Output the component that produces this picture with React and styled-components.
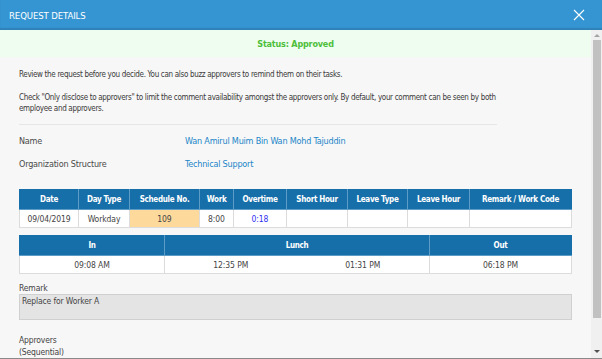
import React from "react";
import styled, { createGlobalStyle } from "styled-components";

const GlobalStyle = createGlobalStyle`
    html, body {
        margin: 0;
        padding: 0;
        background: #f7f7f7;
    }
    body {
        font-family: "DejaVu Sans Condensed", "Liberation Sans", sans-serif;
        color: #444;
    }
`;

const rows = [
    { date: "09/04/2019", dayType: "Workday", schedule: "109", work: "8:00", overtime: "0:18" }
];

const App = () => {
    return (
        <>
            <GlobalStyle />
            <Dialog>
                <Header>
                    <Title>REQUEST DETAILS</Title>
                    <Close aria-label="close">
                        <svg width="12" height="12" viewBox="0 0 12 12">
                            <path d="M1 1 L11 11 M11 1 L1 11" stroke="#fff" strokeWidth="1.1" fill="none" />
                        </svg>
                    </Close>
                </Header>
                <Main>
                    <Content>
                        <Status>Status: Approved</Status>
                        <Body>
                            <Note>Review the request before you decide. You can also buzz approvers to remind them on their tasks.</Note>
                            <Note $gap>Check "Only disclose to approvers" to limit the comment availability amongst the approvers only. By default, your comment can be seen by both employee and approvers.</Note>
                            <Divider />
                            <InfoRow $first>
                                <Label>Name</Label>
                                <Value>Wan Amirul Muim Bin Wan Mohd Tajuddin</Value>
                            </InfoRow>
                            <InfoRow>
                                <Label>Organization Structure</Label>
                                <Value>Technical Support</Value>
                            </InfoRow>

                            <Table $top={14}>
                                <colgroup>
                                    <col style={{ width: 59 }} />
                                    <col style={{ width: 51 }} />
                                    <col style={{ width: 70 }} />
                                    <col style={{ width: 34 }} />
                                    <col style={{ width: 53 }} />
                                    <col style={{ width: 61 }} />
                                    <col style={{ width: 60 }} />
                                    <col style={{ width: 62 }} />
                                    <col />
                                </colgroup>
                                <thead>
                                    <tr>
                                        <Th>Date</Th>
                                        <Th>Day Type</Th>
                                        <Th>Schedule No.</Th>
                                        <Th>Work</Th>
                                        <Th>Overtime</Th>
                                        <Th>Short Hour</Th>
                                        <Th>Leave Type</Th>
                                        <Th>Leave Hour</Th>
                                        <Th>Remark / Work Code</Th>
                                    </tr>
                                </thead>
                                <tbody>
                                    {rows.map(r => (
                                        <tr key={r.date}>
                                            <Td>{r.date}</Td>
                                            <Td>{r.dayType}</Td>
                                            <Td $bg="#fdd99b">{r.schedule}</Td>
                                            <Td>{r.work}</Td>
                                            <Td $color="#2f2ff0">{r.overtime}</Td>
                                            <Td />
                                            <Td />
                                            <Td />
                                            <Td />
                                        </tr>
                                    ))}
                                </tbody>
                            </Table>

                            <Table $top={7}>
                                <colgroup>
                                    <col style={{ width: 145 }} />
                                    <col style={{ width: 132 }} />
                                    <col style={{ width: 133 }} />
                                    <col />
                                </colgroup>
                                <thead>
                                    <tr>
                                        <Th>In</Th>
                                        <Th colSpan={2}>Lunch</Th>
                                        <Th>Out</Th>
                                    </tr>
                                </thead>
                                <tbody>
                                    <tr>
                                        <Td>09:08 AM</Td>
                                        <Td $noRight>12:35 PM</Td>
                                        <Td $noLeft>01:31 PM</Td>
                                        <Td>06:18 PM</Td>
                                    </tr>
                                </tbody>
                            </Table>

                            <FieldLabel>Remark</FieldLabel>
                            <RemarkBox>Replace for Worker A</RemarkBox>

                            <Approvers>
                                Approvers
                                <br />
                                (Sequential)
                            </Approvers>
                        </Body>
                    </Content>
                    <ScrollTrack>
                        <Arrow $up />
                        <Thumb />
                        <Arrow />
                    </ScrollTrack>
                </Main>
            </Dialog>
        </>
    );
};

//Design
const Dialog = styled.div`
    display: flex;
    flex-direction: column;
    width: 602px;
    height: 359px;
    box-sizing: border-box;
    border-bottom: 1px solid #8a8a8a;
    overflow: hidden;
`;
const Header = styled.div`
    flex: 0 0 30px;
    display: flex;
    align-items: center;
    justify-content: space-between;
    padding: 0 17px 0 9px;
    background: #3595d2;
    box-shadow: inset 0 -2px 1px rgba(0, 0, 0, 0.12);
`;
const Title = styled.div`
    color: #fff;
    font-size: 9.5px;
    letter-spacing: -0.1px;
`;
const Close = styled.div`
    display: flex;
    width: 12px;
    height: 12px;
`;
const Main = styled.div`
    flex: 1;
    min-height: 0;
    display: flex;
`;
const Content = styled.div`
    flex: 1;
    overflow: hidden;
    background: #f7f7f7;
`;
const ScrollTrack = styled.div`
    flex: 0 0 11px;
    display: flex;
    flex-direction: column;
    align-items: center;
    background: #f0f0f0;
    padding: 4px 0 5px;
    box-sizing: border-box;
`;
const Arrow = styled.div`
    width: 0;
    height: 0;
    border-left: 3px solid transparent;
    border-right: 3px solid transparent;
    ${p => (p.$up ? "border-bottom: 3px solid #a3a3a3;" : "border-top: 3px solid #505050;")}
    ${p => (p.$up ? "margin-bottom: 3px;" : "margin-top: auto;")}
`;
const Thumb = styled.div`
    width: 8px;
    height: 278px;
    background: #c1c1c1;
`;
const Status = styled.div`
    height: 27px;
    display: flex;
    align-items: center;
    justify-content: center;
    background: #eefdf0;
    color: #4dbf3a;
    font-weight: bold;
    font-size: 9px;
    letter-spacing: -0.2px;
`;
const Body = styled.div`
    padding: 12px 19px 20px 19px;
`;
const Note = styled.p`
    width: 500px;
    margin: ${p => (p.$gap ? "12px" : "0")} 0 0 0;
    font-size: 8px;
    line-height: 11px;
    letter-spacing: -0.33px;
    color: #3a3a3a;
`;
const Divider = styled.div`
    width: 478px;
    height: 1px;
    background: #e6e6e6;
    margin-top: 10px;
`;
const InfoRow = styled.div`
    display: flex;
    height: 23px;
    align-items: center;
    font-size: 9px;
    letter-spacing: -0.2px;
    margin-top: ${p => (p.$first ? "4px" : "0")};
`;
const Label = styled.div`
    width: 166px;
    color: #4a4a4a;
`;
const Value = styled.div`
    color: #1b86c8;
`;
const Table = styled.table`
    width: 553px;
    margin-top: ${p => p.$top}px;
    border-collapse: collapse;
    table-layout: fixed;
    font-size: 8.5px;
    letter-spacing: -0.1px;
    background: #fff;
`;
const Th = styled.th`
    height: 19px;
    padding: 0;
    background: #176fa9;
    color: #fff;
    font-weight: bold;
    font-size: 8px;
    letter-spacing: -0.3px;
    text-align: center;
    border: 1px solid #5d9cc6;
    border-top-color: #176fa9;
    &:first-child {
        border-left-color: #176fa9;
    }
    &:last-child {
        border-right-color: #176fa9;
    }
`;
const Td = styled.td`
    height: 17px;
    padding: 0;
    text-align: center;
    color: ${p => p.$color || "#444"};
    background: ${p => p.$bg || "#fff"};
    border: 1px solid #dcdcdc;
    ${p => p.$noRight && "border-right: none;"}
    ${p => p.$noLeft && "border-left: none;"}
`;
const FieldLabel = styled.div`
    margin-top: 8px;
    font-size: 8.5px;
    line-height: 12px;
    letter-spacing: -0.15px;
    color: #444;
`;
const RemarkBox = styled.div`
    height: 26px;
    width: 553px;
    box-sizing: border-box;
    padding: 1px 2px;
    background: #e4e4e4;
    border: 1px solid #d0d0d0;
    font-size: 8.5px;
    letter-spacing: -0.15px;
    color: #444;
`;
const Approvers = styled.div`
    margin-top: 14px;
    font-size: 8.5px;
    line-height: 12px;
    letter-spacing: -0.15px;
    color: #444;
`;

export default App;
